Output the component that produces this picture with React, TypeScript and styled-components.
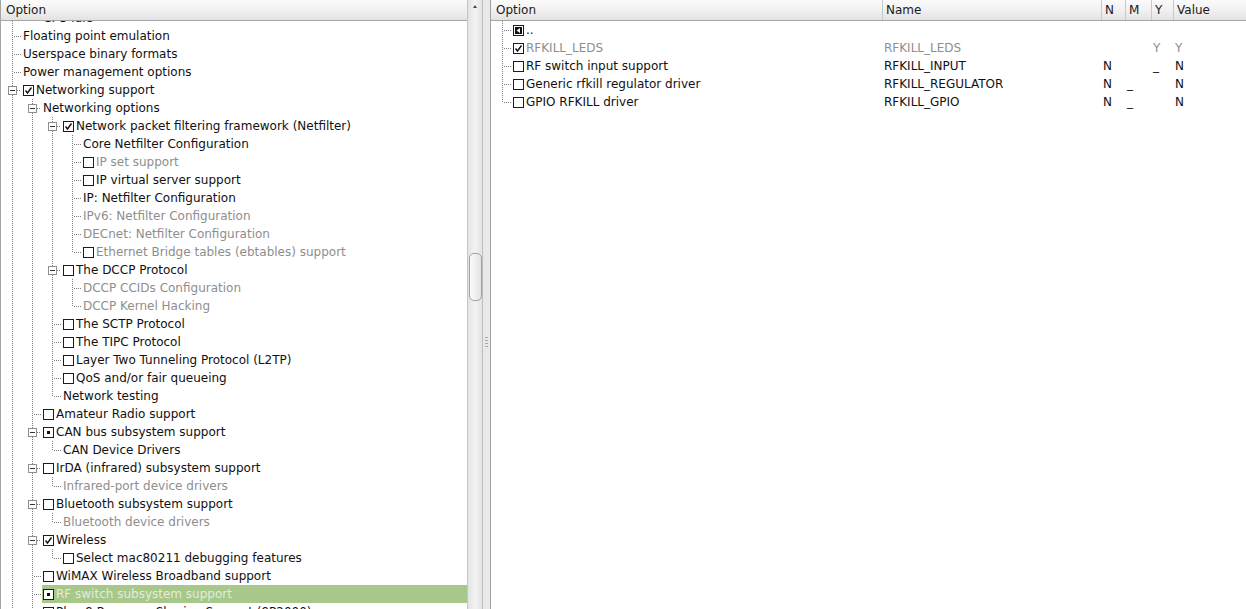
import React from 'react';
import styled, { createGlobalStyle } from 'styled-components';

const GlobalStyle = createGlobalStyle`
  html, body {
    margin: 0;
    padding: 0;
    overflow: hidden;
    background: #ebebeb;
  }
  body {
    font-family: "DejaVu Sans", "Noto Sans", sans-serif;
    font-size: 12px;
    color: #111;
  }
`;

type Kind = 'text' | 'off' | 'on' | 'mod' | 'up';

interface Row {
  lv: number;
  label: string;
  kind: Kind;
  dim?: boolean;
  last?: boolean;
  open?: boolean;
  selected?: boolean;
}

interface RightRow extends Row {
  name: string;
  n: string;
  m: string;
  y: string;
  value: string;
}

const leftRows: Row[] = [
  { lv: 1, label: 'CPU idle', kind: 'text', last: true },
  { lv: 0, label: 'Floating point emulation', kind: 'text' },
  { lv: 0, label: 'Userspace binary formats', kind: 'text' },
  { lv: 0, label: 'Power management options', kind: 'text' },
  { lv: 0, label: 'Networking support', kind: 'on', open: true },
  { lv: 1, label: 'Networking options', kind: 'text', open: true },
  { lv: 2, label: 'Network packet filtering framework (Netfilter)', kind: 'on', open: true },
  { lv: 3, label: 'Core Netfilter Configuration', kind: 'text' },
  { lv: 3, label: 'IP set support', kind: 'off', dim: true },
  { lv: 3, label: 'IP virtual server support', kind: 'off' },
  { lv: 3, label: 'IP: Netfilter Configuration', kind: 'text' },
  { lv: 3, label: 'IPv6: Netfilter Configuration', kind: 'text', dim: true },
  { lv: 3, label: 'DECnet: Netfilter Configuration', kind: 'text', dim: true },
  { lv: 3, label: 'Ethernet Bridge tables (ebtables) support', kind: 'off', dim: true, last: true },
  { lv: 2, label: 'The DCCP Protocol', kind: 'off', open: true },
  { lv: 3, label: 'DCCP CCIDs Configuration', kind: 'text', dim: true },
  { lv: 3, label: 'DCCP Kernel Hacking', kind: 'text', dim: true, last: true },
  { lv: 2, label: 'The SCTP Protocol', kind: 'off' },
  { lv: 2, label: 'The TIPC Protocol', kind: 'off' },
  { lv: 2, label: 'Layer Two Tunneling Protocol (L2TP)', kind: 'off' },
  { lv: 2, label: 'QoS and/or fair queueing', kind: 'off' },
  { lv: 2, label: 'Network testing', kind: 'text', last: true },
  { lv: 1, label: 'Amateur Radio support', kind: 'off' },
  { lv: 1, label: 'CAN bus subsystem support', kind: 'mod', open: true },
  { lv: 2, label: 'CAN Device Drivers', kind: 'text', last: true },
  { lv: 1, label: 'IrDA (infrared) subsystem support', kind: 'off', open: true },
  { lv: 2, label: 'Infrared-port device drivers', kind: 'text', dim: true, last: true },
  { lv: 1, label: 'Bluetooth subsystem support', kind: 'off', open: true },
  { lv: 2, label: 'Bluetooth device drivers', kind: 'text', dim: true, last: true },
  { lv: 1, label: 'Wireless', kind: 'on', open: true },
  { lv: 2, label: 'Select mac80211 debugging features', kind: 'off', last: true },
  { lv: 1, label: 'WiMAX Wireless Broadband support', kind: 'off' },
  { lv: 1, label: 'RF switch subsystem support', kind: 'mod', selected: true },
  { lv: 1, label: 'Plan 9 Resource Sharing Support (9P2000)', kind: 'off' },
];

const rightRows: RightRow[] = [
  { lv: 0, label: '..', kind: 'up', name: '', n: '', m: '', y: '', value: '' },
  { lv: 0, label: 'RFKILL_LEDS', kind: 'on', dim: true, name: 'RFKILL_LEDS', n: '', m: '', y: 'Y', value: 'Y' },
  { lv: 0, label: 'RF switch input support', kind: 'off', name: 'RFKILL_INPUT', n: 'N', m: '', y: '_', value: 'N' },
  { lv: 0, label: 'Generic rfkill regulator driver', kind: 'off', name: 'RFKILL_REGULATOR', n: 'N', m: '_', y: '', value: 'N' },
  { lv: 0, label: 'GPIO RFKILL driver', kind: 'off', name: 'RFKILL_GPIO', n: 'N', m: '_', y: '', value: 'N', last: true },
];

/* ---------- layout ---------- */

const Window = styled.div`
  display: flex;
  width: 1246px;
  height: 609px;
  overflow: hidden;
`;

const LeftPane = styled.div`
  display: flex;
  flex: none;
  width: 483px;
  height: 100%;
  box-sizing: border-box;
  border-left: 1px solid #a4a4a4;
`;

const TreePanel = styled.div`
  display: flex;
  flex-direction: column;
  flex: none;
  width: 466px;
  height: 100%;
  background: #ffffff;
  min-height: 0;
`;

const RightPane = styled.div`
  display: flex;
  flex-direction: column;
  flex: 1;
  height: 100%;
  box-sizing: border-box;
  border-left: 1px solid #a0a0a0;
  background: #ffffff;
  min-width: 0;
`;

const HeaderBar = styled.div<{ $grid?: boolean }>`
  flex: none;
  height: 21px;
  box-sizing: border-box;
  border-bottom: 1px solid #a6a6a6;
  background: linear-gradient(to bottom, #fbfbfb 0%, #f0f0f0 55%, #e2e2e2 100%);
  display: ${(p) => (p.$grid ? 'grid' : 'flex')};
  grid-template-columns: 391px 219px 24px 26px 22px 1fr;
  color: #1a1a1a;
`;

const HeaderCell = styled.div<{ $first?: boolean }>`
  line-height: 20px;
  padding-left: ${(p) => (p.$first ? '5px' : '3px')};
  border-left: ${(p) => (p.$first ? 'none' : '1px solid #c9c9c9')};
  white-space: nowrap;
  overflow: hidden;
`;

const Viewport = styled.div`
  flex: 1;
  overflow: hidden;
  min-height: 0;
`;

const RowList = styled.div<{ $offset: number }>`
  display: flex;
  flex-direction: column;
  margin-top: ${(p) => p.$offset}px;
`;

const TreeRow = styled.div`
  display: flex;
  flex: none;
  height: 18px;
  line-height: 18px;
  white-space: nowrap;
`;

const TableRow = styled.div`
  display: grid;
  grid-template-columns: 391px 219px 24px 26px 22px 1fr;
  height: 18px;
  line-height: 18px;
  white-space: nowrap;
`;

const OptionCell = styled.div`
  display: flex;
  overflow: hidden;
`;

const ValueCell = styled.div<{ $dim?: boolean }>`
  padding-left: 2px;
  color: ${(p) => (p.$dim ? '#8e8e8e' : '#111')};
  overflow: hidden;
`;

const ItemBody = styled.div<{ $dim?: boolean; $selected?: boolean }>`
  display: flex;
  align-items: center;
  flex: 1;
  margin-left: 1px;
  padding-left: 1px;
  background: ${(p) => (p.$selected ? '#a7c78b' : 'transparent')};
  color: ${(p) => (p.$selected ? '#e4ecd9' : p.$dim ? '#8e8e8e' : '#111')};
`;

const Label = styled.span`
  padding-left: 2px;
`;

const Guide = styled.svg`
  display: block;
  flex: none;
`;

const BoxIcon = styled.svg`
  display: block;
  flex: none;
`;

/* ---------- scrollbar & splitter ---------- */

const ScrollBar = styled.div`
  display: flex;
  flex-direction: column;
  align-items: center;
  flex: none;
  width: 16px;
  height: 100%;
  box-sizing: border-box;
  border-left: 1px solid #c6c6c6;
  border-right: 1px solid #bdbdbd;
  background: linear-gradient(to right, #e3e3e3 0%, #f3f3f3 50%, #e3e3e3 100%);
`;

const ArrowUp = styled.div`
  flex: none;
  margin-top: 5px;
  width: 0;
  height: 0;
  border-left: 2.5px solid transparent;
  border-right: 2.5px solid transparent;
  border-bottom: 3px solid #4a4a4a;
`;

const Thumb = styled.div`
  flex: none;
  margin-top: 245px;
  width: 13px;
  height: 48px;
  box-sizing: border-box;
  border: 1px solid #a2a2a2;
  border-radius: 5px;
  background: linear-gradient(to right, #fbfbfb 0%, #f0f0f0 50%, #e2e2e2 100%);
`;

const Splitter = styled.div`
  display: flex;
  flex-direction: column;
  align-items: center;
  flex: none;
  width: 7px;
  height: 100%;
  background: #e9e9e9;
`;

const Grip = styled.div`
  margin-top: 337px;
  width: 3px;
  height: 12px;
  background: repeating-linear-gradient(to bottom, #a9a9a9 0 1px, transparent 1px 3px);
`;

/* ---------- drawings ---------- */

const LINE = '#7d7d7d';

function Pipe({ on }: { on: boolean }) {
  return (
    <Guide width={20} height={18} viewBox="0 0 20 18" shapeRendering="crispEdges">
      {on && <line x1={11.5} y1={0} x2={11.5} y2={18} stroke={LINE} strokeDasharray="1 1" />}
    </Guide>
  );
}

function Branch({ last, open }: { last?: boolean; open?: boolean }) {
  return (
    <Guide width={20} height={18} viewBox="0 0 20 18" shapeRendering="crispEdges">
      {open ? (
        <>
          <line x1={11.5} y1={0} x2={11.5} y2={5} stroke={LINE} strokeDasharray="1 1" />
          {!last && <line x1={11.5} y1={14} x2={11.5} y2={18} stroke={LINE} strokeDasharray="1 1" />}
          <line x1={16} y1={9.5} x2={21} y2={9.5} stroke={LINE} strokeDasharray="1 1" />
          <rect x={7.5} y={5.5} width={8} height={8} fill="#fff" stroke="#8f8f8f" />
          <line x1={9} y1={9.5} x2={14} y2={9.5} stroke="#333" />
        </>
      ) : (
        <>
          <line x1={11.5} y1={0} x2={11.5} y2={last ? 10 : 18} stroke={LINE} strokeDasharray="1 1" />
          <line x1={13} y1={9.5} x2={21} y2={9.5} stroke={LINE} strokeDasharray="1 1" />
        </>
      )}
    </Guide>
  );
}

function CheckIcon({ kind }: { kind: Kind }) {
  if (kind === 'text') return null;
  return (
    <BoxIcon width={11} height={11} viewBox="0 0 11 11" shapeRendering="crispEdges">
      <rect x={0.5} y={0.5} width={10} height={10} fill="#fff" stroke="#1c1c1c" />
      {kind === 'on' && (
        <polyline
          points="2.5,5.5 4.5,8 8.5,2.5"
          fill="none"
          stroke="#111"
          strokeWidth={1.4}
          shapeRendering="geometricPrecision"
        />
      )}
      {kind === 'mod' && <rect x={4} y={4} width={3} height={3} fill="#111" />}
      {kind === 'up' && (
        <>
          <rect x={2} y={2} width={7} height={7} fill="#111" />
          <polygon points="7,3 7,8 3.5,5.5" fill="#fff" shapeRendering="geometricPrecision" />
        </>
      )}
    </BoxIcon>
  );
}

function useGuides<T extends Row>(rows: T[]) {
  const lastAt: Record<number, boolean> = {};
  return rows.map((r) => {
    const pipes: boolean[] = [];
    for (let k = 0; k < r.lv; k++) pipes.push(!lastAt[k]);
    lastAt[r.lv] = !!r.last;
    return { row: r, pipes };
  });
}

function TreeItem({ row, pipes }: { row: Row; pipes: boolean[] }) {
  return (
    <>
      {pipes.map((on, i) => (
        <Pipe key={i} on={on} />
      ))}
      <Branch last={row.last} open={row.open} />
      <ItemBody $dim={row.dim} $selected={row.selected}>
        <CheckIcon kind={row.kind} />
        {row.kind === 'text' ? <span>{row.label}</span> : <Label>{row.label}</Label>}
      </ItemBody>
    </>
  );
}

export default function App() {
  const left = useGuides(leftRows);
  const right = useGuides(rightRows);
  return (
    <>
      <GlobalStyle />
      <Window>
        <LeftPane>
          <TreePanel>
            <HeaderBar>
              <HeaderCell $first>Option</HeaderCell>
            </HeaderBar>
            <Viewport>
              <RowList $offset={-12}>
                {left.map(({ row, pipes }, i) => (
                  <TreeRow key={i}>
                    <TreeItem row={row} pipes={pipes} />
                  </TreeRow>
                ))}
              </RowList>
            </Viewport>
          </TreePanel>
          <ScrollBar>
            <ArrowUp />
            <Thumb />
          </ScrollBar>
        </LeftPane>
        <Splitter>
          <Grip />
        </Splitter>
        <RightPane>
          <HeaderBar $grid>
            <HeaderCell $first>Option</HeaderCell>
            <HeaderCell>Name</HeaderCell>
            <HeaderCell>N</HeaderCell>
            <HeaderCell>M</HeaderCell>
            <HeaderCell>Y</HeaderCell>
            <HeaderCell>Value</HeaderCell>
          </HeaderBar>
          <Viewport>
            <RowList $offset={0}>
              {right.map(({ row, pipes }, i) => (
                <TableRow key={i}>
                  <OptionCell>
                    <TreeItem row={row} pipes={pipes} />
                  </OptionCell>
                  <ValueCell $dim={row.dim}>{row.name}</ValueCell>
                  <ValueCell $dim={row.dim}>{row.n}</ValueCell>
                  <ValueCell $dim={row.dim}>{row.m}</ValueCell>
                  <ValueCell $dim={row.dim}>{row.y}</ValueCell>
                  <ValueCell $dim={row.dim}>{row.value}</ValueCell>
                </TableRow>
              ))}
            </RowList>
          </Viewport>
        </RightPane>
      </Window>
    </>
  );
}
